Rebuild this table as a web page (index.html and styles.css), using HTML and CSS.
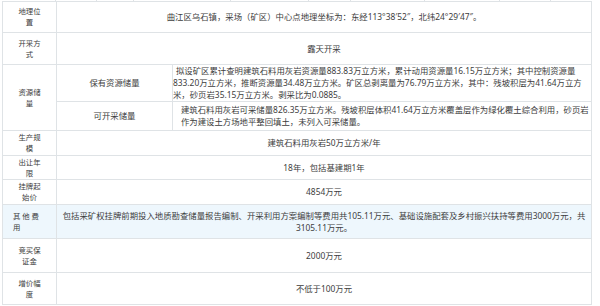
FILE: index.html
```html
<!DOCTYPE html>
<html lang="zh-CN">
<head>
<meta charset="utf-8">
<link rel="stylesheet" href="styles.css">
</head>
<body>
<div class="page">
  <div class="ticks">
    <span class="tk" style="width:54px"></span>
    <span class="tk" style="width:41px"></span>
    <span class="tk" style="width:37px"></span>
    <span class="tk" style="width:97px"></span>
    <span class="tk" style="width:78px"></span>
    <span class="tk" style="width:42px"></span>
    <span class="tk" style="width:74px"></span>
    <span class="tk" style="width:75px"></span>
    <span class="tk" style="width:51px"></span>
    <span class="tk last"></span>
  </div>
  <table class="info">
    <colgroup>
      <col class="c1"><col class="c2"><col class="c3">
    </colgroup>
    <tr class="r-geo">
      <th>地理位置</th>
      <td colspan="2" class="center">曲江区乌石镇，采场（矿区）中心点地理坐标为：东经113°38′52″，北纬24°29′47″。</td>
    </tr>
    <tr class="r-mode">
      <th>开采方式</th>
      <td colspan="2" class="center">露天开采</td>
    </tr>
    <tr class="r-res1">
      <th rowspan="2">资源储量</th>
      <td class="sub">保有资源储量</td>
      <td class="left"><span class="lead">拟设矿区累计查明建筑石料用灰岩资源量883.83万立方米，累计动用资源量16.15万立方米；其中控制资源量</span>833.20万立方米，推断资源量34.48万立方米。矿区总剥离量为76.79万立方米，其中：残坡积层为41.64万立方米，砂页岩35.15万立方米。剥采比为0.0885。</td>
    </tr>
    <tr class="r-res2">
      <td class="sub">可开采储量</td>
      <td class="left pad">建筑石料用灰岩可采储量826.35万立方米。残坡积层体积41.64万立方米覆盖层作为绿化覆土综合利用，砂页岩作为建设土方场地平整回填土，未列入可采储量。</td>
    </tr>
    <tr class="r-scale">
      <th>生产规模</th>
      <td colspan="2" class="center">建筑石料用灰岩50万立方米/年</td>
    </tr>
    <tr class="r-term">
      <th>出让年限</th>
      <td colspan="2" class="center">18年，包括基建期1年</td>
    </tr>
    <tr class="r-price">
      <th>挂牌起始价</th>
      <td colspan="2" class="center">4854万元</td>
    </tr>
    <tr class="r-fee hover">
      <th class="th-left">其 他 费用</th>
      <td colspan="2" class="center">包括采矿权挂牌前期投入地质勘查储量报告编制、开采利用方案编制等费用共105.11万元、基础设施配套及乡村振兴扶持等费用3000万元，共3105.11万元。</td>
    </tr>
    <tr class="r-dep">
      <th>竞买保证金</th>
      <td colspan="2" class="center">2000万元</td>
    </tr>
    <tr class="r-inc">
      <th>增价幅度</th>
      <td colspan="2" class="center">不低于100万元</td>
    </tr>
  </table>
  <div class="after">备注：</div>
</div>
</body>
</html>
```

FILE: styles.css
```css
html, body {
  margin: 0;
  padding: 0;
  background: #ffffff;
}

.page {
  padding: 0 0 0 2px;
  width: 589px;
  font-family: "Noto Sans", "Noto Sans CJK SC", sans-serif;
  color: #3d3d3d;
}

.ticks {
  display: flex;
  height: 1px;
}

.tk {
  display: block;
  height: 1px;
  border-right: 1px solid #dfe3e6;
  box-sizing: border-box;
}

.tk.last {
  flex: 1;
  border-right: none;
}

.info {
  width: 589px;
  border-collapse: collapse;
  table-layout: fixed;
}

.c1 { width: 54px; }
.c2 { width: 116px; }
.c3 { width: 419px; }

.info th,
.info td {
  border: 1px solid #dfe3e6;
  padding: 0;
  vertical-align: middle;
}

.info th {
  font-weight: normal;
  font-size: 7.4px;
  line-height: 11px;
  text-align: center;
  padding: 0 12px;
}

.info th.th-left {
  text-align: left;
  padding: 0 10px;
}

.info td {
  font-size: 8.4px;
  line-height: 12px;
}

.center {
  text-align: center;
  padding: 0 6px;
}

.left {
  text-align: left;
  padding: 0 3px 0 5px;
}

.lead {
  padding-left: 3px;
}

.left.pad {
  padding-left: 8px;
}

.sub {
  text-align: center;
}

.r-geo { height: 31px; }
.r-mode { height: 32px; }
.r-res1 { height: 35px; }
.r-res2 { height: 29px; }
.r-scale { height: 25px; }
.r-term { height: 24px; }
.r-price { height: 25px; }
.r-fee { height: 34px; }
.r-dep { height: 34px; }
.r-inc { height: 32px; }

.hover th,
.hover td {
  background: #eef7fd;
}

.after {
  font-size: 7.4px;
  line-height: 11px;
  padding: 1px 0 0 8px;
}
```
